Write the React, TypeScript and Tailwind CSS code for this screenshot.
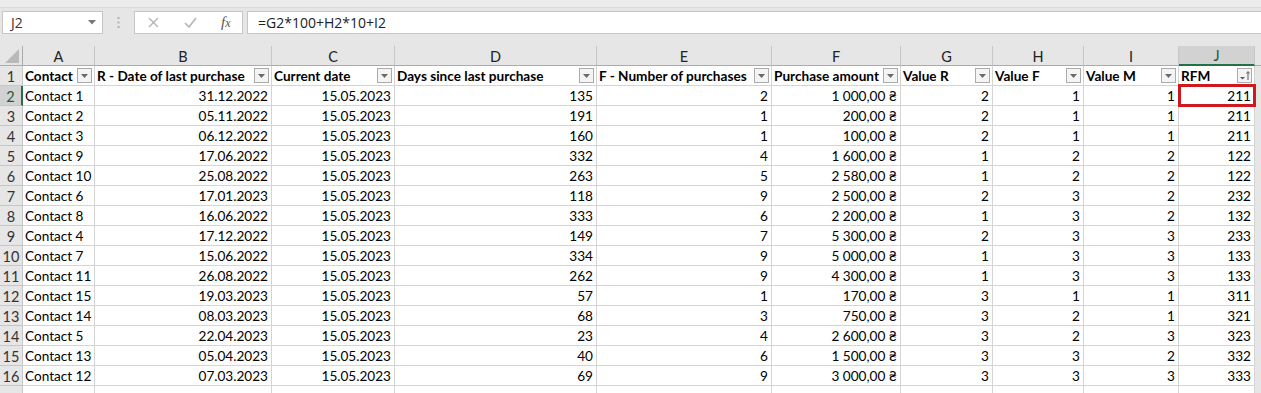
import React from "react";

const cols = ["A", "B", "C", "D", "E", "F", "G", "H", "I", "J"];

const headers = [
  "Contact",
  "R - Date of last purchase",
  "Current date",
  "Days since last purchase",
  "F - Number of purchases",
  "Purchase amount",
  "Value R",
  "Value F",
  "Value M",
  "RFM",
];

const rows: (string | number)[][] = [
  ["Contact 1", "31.12.2022", "15.05.2023", 135, 2, "1 000,00 ₴", 2, 1, 1, 211],
  ["Contact 2", "05.11.2022", "15.05.2023", 191, 1, "200,00 ₴", 2, 1, 1, 211],
  ["Contact 3", "06.12.2022", "15.05.2023", 160, 1, "100,00 ₴", 2, 1, 1, 211],
  ["Contact 9", "17.06.2022", "15.05.2023", 332, 4, "1 600,00 ₴", 1, 2, 2, 122],
  ["Contact 10", "25.08.2022", "15.05.2023", 263, 5, "2 580,00 ₴", 1, 2, 2, 122],
  ["Contact 6", "17.01.2023", "15.05.2023", 118, 9, "2 500,00 ₴", 2, 3, 2, 232],
  ["Contact 8", "16.06.2022", "15.05.2023", 333, 6, "2 200,00 ₴", 1, 3, 2, 132],
  ["Contact 4", "17.12.2022", "15.05.2023", 149, 7, "5 300,00 ₴", 2, 3, 3, 233],
  ["Contact 7", "15.06.2022", "15.05.2023", 334, 9, "5 000,00 ₴", 1, 3, 3, 133],
  ["Contact 11", "26.08.2022", "15.05.2023", 262, 9, "4 300,00 ₴", 1, 3, 3, 133],
  ["Contact 15", "19.03.2023", "15.05.2023", 57, 1, "170,00 ₴", 3, 1, 1, 311],
  ["Contact 14", "08.03.2023", "15.05.2023", 68, 3, "750,00 ₴", 3, 2, 1, 321],
  ["Contact 5", "22.04.2023", "15.05.2023", 23, 4, "2 600,00 ₴", 3, 2, 3, 323],
  ["Contact 13", "05.04.2023", "15.05.2023", 40, 6, "1 500,00 ₴", 3, 3, 2, 332],
  ["Contact 12", "07.03.2023", "15.05.2023", 69, 9, "3 000,00 ₴", 3, 3, 3, 333],
];

const FilterButton = ({ sorted }: { sorted?: boolean }) => (
  <span className="ml-auto mr-[2px] flex h-[15px] w-[15px] shrink-0 items-center justify-center border border-[#ababab] bg-[#f4f4f4]">
    {sorted ? (
      <svg width="13" height="13" viewBox="0 0 13 13">
        <path d="M2 8 L7 8 L4.5 10.5 Z" fill="#5a5a5a" />
        <path d="M10 11 L10 3 M8.5 4.5 L10 2.5 L11.5 4.5" stroke="#5a5a5a" strokeWidth="1" fill="none" />
      </svg>
    ) : (
      <svg width="9" height="6" viewBox="0 0 9 6">
        <path d="M1 1 L8 1 L4.5 5 Z" fill="#6a6a6a" />
      </svg>
    )}
  </span>
);

const cellBase =
  "h-5 border-r border-b border-[#d4d4d4] flex items-center whitespace-nowrap leading-none";

export default function App() {
  return (
    <div
      className="h-[393px] w-[1261px] overflow-hidden bg-white text-black"
      style={{ fontFamily: "Lato, 'Liberation Sans', sans-serif" }}
    >
      {/* formula bar */}
      <div className="h-[46px] bg-[#e6e6e6]">
        <div className="h-[8px] border-b border-[#dadada] bg-[#ececec]" />
        <div className="flex h-[26px] items-stretch pt-[3px]">
          <div className="ml-[2px] flex w-[101px] items-center border border-[#c6c6c6] bg-white pl-[8px] pr-[6px] text-[14px] text-[#333]" style={{ fontFamily: "'Open Sans', 'Noto Sans', sans-serif" }}>
            <span>J2</span>
            <svg className="ml-auto" width="8" height="5" viewBox="0 0 8 5">
              <path d="M0 0 L8 0 L4 4.5 Z" fill="#777" />
            </svg>
          </div>
          <div className="flex w-[31px] items-center justify-center">
            <svg width="3" height="11" viewBox="0 0 3 11">
              <rect x="0.5" y="0" width="2" height="2" fill="#b0b0b0" />
              <rect x="0.5" y="4.5" width="2" height="2" fill="#b0b0b0" />
              <rect x="0.5" y="9" width="2" height="2" fill="#b0b0b0" />
            </svg>
          </div>
          <div className="flex w-[109px] items-center border border-[#c6c6c6] bg-white">
            <svg className="ml-[13px]" width="11" height="11" viewBox="0 0 11 11">
              <path d="M1 1 L10 10 M10 1 L1 10" stroke="#b4b4b4" strokeWidth="1.4" />
            </svg>
            <svg className="ml-[25px]" width="13" height="11" viewBox="0 0 13 11">
              <path d="M1 6 L5 10 L12 1" stroke="#b4b4b4" strokeWidth="1.6" fill="none" />
            </svg>
            <span
              className="ml-[24px] text-[15px] italic text-[#555]"
              style={{ fontFamily: "'Liberation Serif', serif" }}
            >
              f<span className="text-[12px]">x</span>
            </span>
          </div>
          <div className="ml-[4px] flex flex-1 items-center border border-r-0 border-[#c6c6c6] bg-white pl-[10px] text-[14px] text-[#222]" style={{ fontFamily: "'Open Sans', 'Noto Sans', sans-serif" }}>
            =G2*100+H2*10+I2
          </div>
        </div>
      </div>

      {/* sheet */}
      <div className="grid grid-cols-[23px_72px_177px_123px_202px_175px_129px_92px_91px_95px_76px_1fr] text-[13.6px]">
        {/* column letters */}
        <div className="relative h-5 border-r border-b border-[#ababab] bg-[#e6e6e6]">
          <svg className="absolute left-[5px] top-[3px]" width="14" height="14" viewBox="0 0 14 14">
            <path d="M14 0 L14 14 L0 14 Z" fill="#b9b9b9" />
          </svg>
        </div>
        {cols.map((c) => (
          <div
            key={c}
            className={
              c === "J"
                ? "flex h-5 items-center justify-center border-r border-b-2 border-r-[#c6c6c6] border-b-[#217346] bg-[#d2d2d2] pt-[2px] text-[14.5px] text-[#1e5c38]"
                : "flex h-5 items-center justify-center border-r border-b border-r-[#c6c6c6] border-b-[#ababab] bg-[#e6e6e6] pt-[2px] text-[14.5px] text-[#222]"
            }
          >
            {c}
          </div>
        ))}
        <div className="h-5 border-b border-[#ababab] bg-[#e6e6e6]" />

        {/* header row */}
        <div className="flex h-5 items-center justify-center border-r border-b border-[#c6c6c6] bg-[#e6e6e6] pt-[2px] text-[14.5px] text-[#333]">
          1
        </div>
        {headers.map((h, i) => (
          <div key={h} className={`${cellBase} pl-[2px] font-bold`}>
            <span className="pt-[3px]">{h}</span>
            <FilterButton sorted={i === 9} />
          </div>
        ))}
        <div className="h-5 bg-[#e6e6e6]" />

        {/* data rows */}
        {rows.map((r, ri) => {
          const rowNum = ri + 2;
          const selected = rowNum === 2;
          return (
            <React.Fragment key={rowNum}>
              <div
                className={
                  selected
                    ? "flex h-5 items-center justify-center border-r-2 border-b border-r-[#217346] border-b-[#c6c6c6] bg-[#d2d2d2] pt-[2px] text-[14.5px] text-[#1e5c38]"
                    : "flex h-5 items-center justify-center border-r border-b border-[#c6c6c6] bg-[#e6e6e6] pt-[2px] text-[14.5px] text-[#333]"
                }
              >
                {rowNum}
              </div>
              {r.map((v, ci) => (
                <div
                  key={ci}
                  className={`${cellBase} pt-[3px] ${selected && ci === 9 ? "relative" : ""} ${ci === 0 ? "pl-[2px]" : "justify-end pr-[3px]"}`}
                >
                  {v}
                  {selected && ci === 9 && (
                    <span className="pointer-events-none absolute -left-[1px] -top-[2px] z-10 h-[23px] w-[78px] border-[3px] border-[#d0191f]" />
                  )}
                </div>
              ))}
              <div className="h-5 bg-[#e6e6e6]" />
            </React.Fragment>
          );
        })}

        {/* row 17, cut by the window */}
        <div className="h-5 border-r border-[#c6c6c6] bg-[#e6e6e6]" />
        {cols.map((c) => (
          <div key={c} className="h-5 border-r border-[#d4d4d4]" />
        ))}
        <div className="h-5 bg-[#e6e6e6]" />
      </div>
    </div>
  );
}
